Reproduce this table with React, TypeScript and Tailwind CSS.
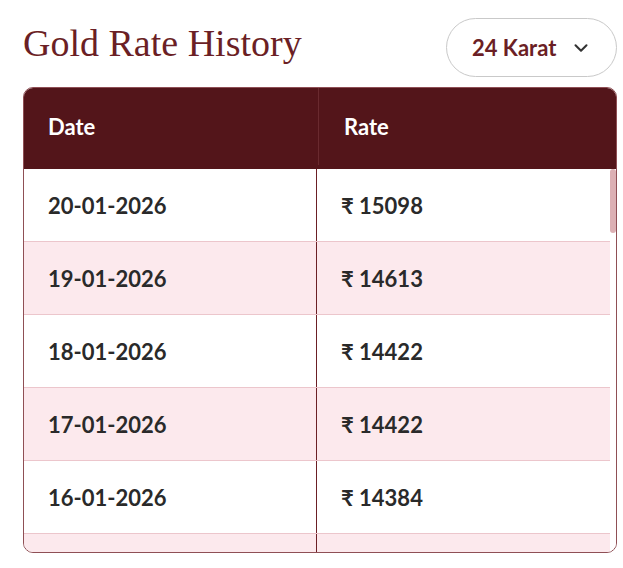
import { ChevronDown } from 'lucide-react';

const ROWS = [
  { date: '20-01-2026', rate: 15098 },
  { date: '19-01-2026', rate: 14613 },
  { date: '18-01-2026', rate: 14422 },
  { date: '17-01-2026', rate: 14422 },
  { date: '16-01-2026', rate: 14384 },
];

export default function App() {
  return (
    <div className="h-[568px] w-[623px] bg-white pl-[23px] pr-[6px] pt-[18px] font-['Lato',sans-serif]">
      <div className="flex items-start justify-between">
        <h2 className="mt-[3px] font-['Liberation_Serif',serif] text-[38px] leading-[44px] text-[#6b1f25]">
          Gold Rate History
        </h2>
        <button className="flex h-[59px] w-[171px] items-center justify-between rounded-full border border-[#c9c9c9] pl-[25px] pr-[24px] text-[22px] font-bold text-[#6b1f25]">
          24 Karat
          <ChevronDown size={22} strokeWidth={2.25} className="text-[#333]" />
        </button>
      </div>

      <div className="mt-[10px] overflow-hidden rounded-[10px] border border-[#8f4f55]">
        <div className="grid h-[81px] grid-cols-[295px_1fr] bg-[#53151a] pb-[4px] text-[22px] font-bold text-white">
          <div className="flex items-center border-r border-[#6a2a2f] px-[24px]">Date</div>
          <div className="flex items-center px-[25px]">Rate</div>
        </div>
        <div className="flex h-[383px]">
          <div className="flex-1 overflow-hidden">
            {ROWS.map((r, i) => (
              <div
                key={r.date}
                className={`grid h-[73px] grid-cols-[293px_1fr] border-b border-[#ecc6cc] text-[22px] font-bold text-[#2a2a2a] ${
                  i % 2 === 1 ? 'bg-[#fce9ed]' : 'bg-white'
                }`}
              >
                <div className="flex items-center border-r border-[#6b1f25] px-[24px]">{r.date}</div>
                <div className="flex items-center px-[24px]">₹ {r.rate}</div>
              </div>
            ))}
            {/* next row, scrolled out of view */}
            <div className="grid h-[73px] grid-cols-[293px_1fr] bg-[#fce9ed]">
              <div className="border-r border-[#6b1f25]" />
              <div />
            </div>
          </div>
          <div className="w-[6px] bg-white">
            <div className="h-[64px] rounded-full bg-[#dcb0b4]" />
          </div>
        </div>
      </div>
    </div>
  );
}
